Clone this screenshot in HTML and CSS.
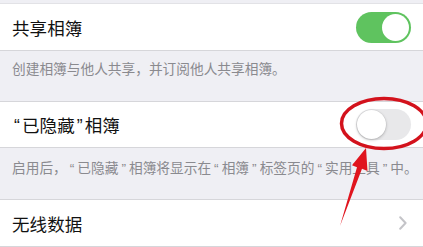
FILE: index.html
```html
<!DOCTYPE html>
<html lang="zh">
<head>
<meta charset="utf-8">
<link rel="stylesheet" href="styles.css">
</head>
<body>
<div class="page">
  <div class="top-gap"></div>
  <div class="row">
    <span class="title">共享相簿</span>
    <span class="switch on"><span class="knob"></span></span>
  </div>
  <div class="footer footer-1">创建相簿与他人共享，并订阅他人共享相簿。</div>
  <div class="row row-2">
    <span class="title"><span class="q">“</span>已隐藏<span class="q">”</span>相簿</span>
    <span class="switch off"><span class="knob"></span></span>
  </div>
  <div class="footer footer-2">启用后，<span class="q">“</span>已隐藏<span class="q">”</span>相簿将显示在<span class="q">“</span>相簿<span class="q">”</span>标签页的<span class="q">“</span>实用工具<span class="q">”</span>中。</div>
  <div class="row">
    <span class="title">无线数据</span>
    <svg class="chevron" width="8" height="14" viewBox="0 0 8 14"><path d="M1.2 1.2 L6.6 7 L1.2 12.8" fill="none" stroke="#c4c4c8" stroke-width="2" stroke-linecap="round" stroke-linejoin="round"/></svg>
  </div>
  <svg class="annot" width="423" height="247" viewBox="0 0 423 247">
    <ellipse cx="384" cy="123.5" rx="42.5" ry="25" fill="none" stroke="#d3121c" stroke-width="3.5"/>
    <polygon points="366,148 367.5,171 362,168.8 340,226 357,167.2 352,165.3" fill="#e0141e"/>
  </svg>
</div>
</body>
</html>
```

FILE: styles.css
```css
html, body {
  margin: 0;
  padding: 0;
}
body {
  background: #efeff4;
  font-family: "Noto Sans CJK SC", "Noto Sans", sans-serif;
}
.page {
  position: relative;
  width: 423px;
  height: 247px;
  overflow: hidden;
}
.top-gap {
  height: 3px;
  border-bottom: 1px solid #e2e2e6;
}
.row {
  height: 46px;
  background: #fff;
  border-bottom: 1px solid #d6d6da;
  display: flex;
  align-items: center;
  justify-content: space-between;
  padding: 0 12px 0 12px;
  box-sizing: content-box;
}
.row-2 {
  height: 45px;
  border-top: 1px solid #d6d6da;
}
.title {
  font-size: 17.5px;
  color: #111;
  letter-spacing: 0.1px;
  white-space: nowrap;
}
.q {
  font-family: "Liberation Sans", sans-serif;
  padding: 0 2px;
}
.footer {
  height: 51px;
  box-sizing: border-box;
  padding: 7px 10px 0 12px;
  font-size: 13.7px;
  line-height: 20px;
  color: #8a8a8f;
  white-space: nowrap;
}
.footer .q {
  padding: 0 3px;
}
.footer-1 {
  height: 50px;
}
.footer-2 {
  height: 52px;
  padding-top: 9px;
  border-bottom: 1px solid #d6d6da;
}
.switch {
  width: 55px;
  height: 31px;
  border-radius: 16px;
  position: relative;
  box-sizing: border-box;
}
.switch.on {
  background: #5fc35f;
}
.switch.off {
  background: #e8e8ea;
}
.knob {
  position: absolute;
  top: 2px;
  width: 27px;
  height: 27px;
  border-radius: 50%;
  background: #fff;
}
.switch.on .knob {
  right: 2px;
}
.switch.off .knob {
  left: 1px;
  top: 1px;
  width: 29px;
  height: 29px;
  box-shadow: 0 1px 3px rgba(0,0,0,0.25), 0 0 0 0.5px rgba(0,0,0,0.06);
}
.chevron {
  margin-right: 4px;
}
.annot {
  position: absolute;
  left: 0;
  top: 0;
  pointer-events: none;
}
```
